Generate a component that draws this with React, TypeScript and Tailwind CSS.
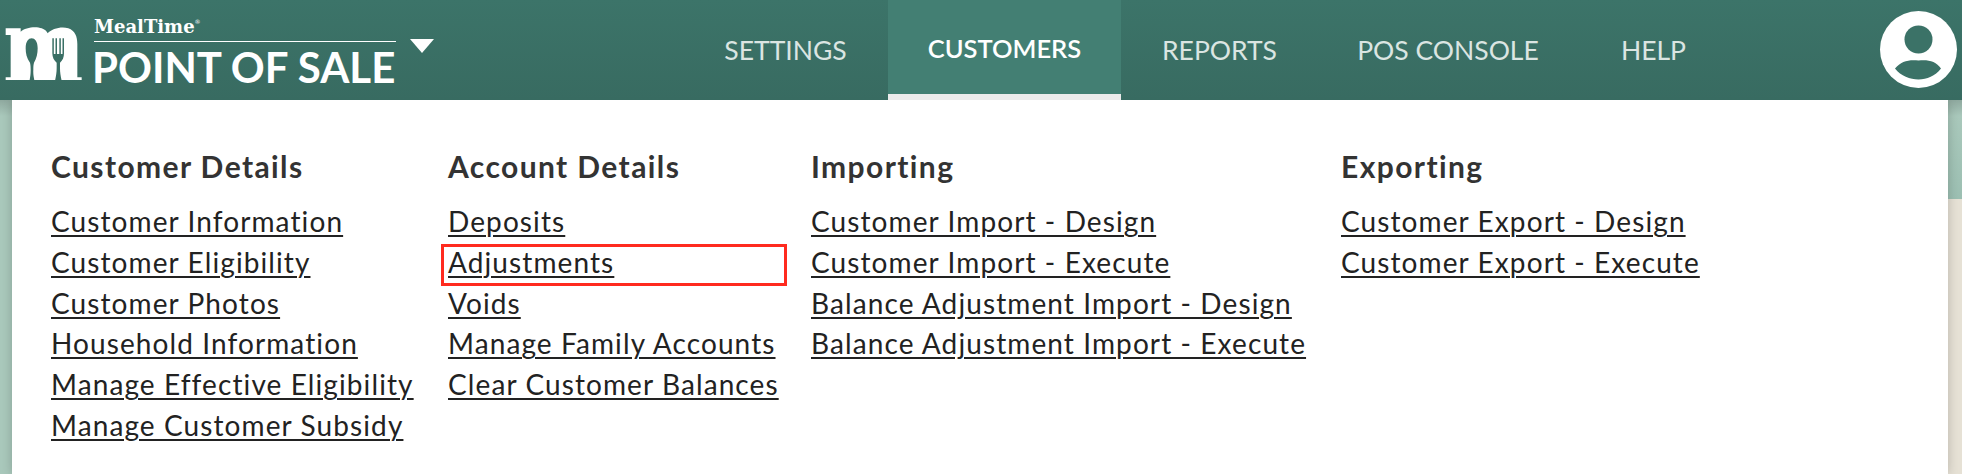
const bodyFont = { fontFamily: 'Lato, sans-serif' };

const columns = [
  {
    title: 'Customer Details',
    width: 'w-[397px]',
    links: [
      'Customer Information',
      'Customer Eligibility',
      'Customer Photos',
      'Household Information',
      'Manage Effective Eligibility',
      'Manage Customer Subsidy',
    ],
  },
  {
    title: 'Account Details',
    width: 'w-[363px]',
    links: ['Deposits', 'Adjustments', 'Voids', 'Manage Family Accounts', 'Clear Customer Balances'],
  },
  {
    title: 'Importing',
    width: 'w-[530px]',
    links: [
      'Customer Import - Design',
      'Customer Import - Execute',
      'Balance Adjustment Import - Design',
      'Balance Adjustment Import - Execute',
    ],
  },
  {
    title: 'Exporting',
    width: 'w-[400px]',
    links: ['Customer Export - Design', 'Customer Export - Execute'],
  },
];

const tabs = [
  { label: 'SETTINGS', width: 'w-[205px]' },
  { label: 'CUSTOMERS', width: 'w-[233px]', active: true },
  { label: 'REPORTS', width: 'w-[197px]' },
  { label: 'POS CONSOLE', width: 'w-[260px]' },
  { label: 'HELP', width: 'w-[151px]' },
];

function Logo() {
  return (
    <svg width="84" height="60" viewBox="0 45 252 180" className="mt-[20px] shrink-0">
      <path
        fill="#fff"
        d="M17 190V172H32V45H17V25H62V35C75 22 108 18 125 25C134 28 140 33 143 40C155 26 185 18 205 25C225 32 232 50 232 72V172H245V190H187C183 175 180 160 180 145V128C188 122 192 112 192 100V55H187.500V102H182.500V55H178V102H171V55H166.500V102H161.500V55H157V100C157 112 162 122 170 128V145C170 160 167 175 163 190H105C102 175 99 165 100 150C100 140 100 135 102 128C110 115 113 100 113 85C113 65 105 55 95 55C85 55 77 65 77 85C77 100 80 115 90 128C92 135 92 145 92 150C92 165 90 175 87 190Z"
        transform="translate(0 45)"
      />
    </svg>
  );
}

export default function App() {
  return (
    <div className="h-[474px] w-[1962px] overflow-hidden" style={bodyFont}>
      <header className="relative z-10 flex h-[100px] bg-gradient-to-b from-[#3c7469] to-[#386b61]">
        <div className="flex w-[683px] shrink-0">
          <Logo />
          <div className="mt-[12px] ml-[10px] flex w-[302px] flex-col text-white">
            <div className="h-[29px] text-[18px] leading-[29px] font-bold" style={{ fontFamily: '"DejaVu Serif", serif' }}>
              MealTime<span className="align-top text-[6px] font-normal leading-[20px]">®</span>
            </div>
            <div className="h-[1px] w-[302px] bg-white" />
            <div className="-ml-[2px] whitespace-nowrap text-[42px] leading-[50px] font-bold">POINT OF SALE</div>
          </div>
          <div className="mt-[39px] ml-[14px] h-0 w-0 border-x-[12px] border-t-[14px] border-x-transparent border-t-white" />
        </div>
        <nav className="flex">
          {tabs.map((t) => (
            <div
              key={t.label}
              className={
                t.active
                  ? `${t.width} flex h-[100px] items-start justify-center border-b-[6px] border-[#ebebeb] bg-[#437f73] pt-[31px] text-[25.500px] leading-[34px] font-semibold text-white`
                  : `${t.width} flex h-[100px] items-start justify-center pt-[33px] text-[26.500px] leading-[34px] text-[#dbe5e2]`
              }
            >
              {t.label}
            </div>
          ))}
        </nav>
        <div className="ml-auto mr-[5px] mt-[11px] flex size-[77px] items-center justify-center rounded-full bg-white">
          <svg width="77" height="77" viewBox="0 0 77 77">
            <circle cx="38.500" cy="28.500" r="14" fill="#3b7267" />
            <path fill="#3b7267" d="M15 57.500C21 50 29 48.500 38.500 49.500 48 48.500 56 50 61 57.500 55 65 47 68.500 38.500 68.500S21 65 15 57.500z" />
          </svg>
        </div>
      </header>
      <div className="flex h-[374px]">
        <div className="w-[12px] shrink-0 bg-[linear-gradient(to_bottom,#8fa99f,#a9c8bb_16px)]" />
        <main className="relative flex w-[1936px] shrink-0 bg-white pt-[45px] pl-[39px] shadow-[0_0_10px_rgba(0,0,0,0.2)]">
          {columns.map((c) => (
            <section key={c.title} className={`${c.width} shrink-0`}>
              <h2 className="text-[30px] leading-[42px] font-bold tracking-[1.400px] text-[#333]">{c.title}</h2>
              <ul className="mt-[14px]">
                {c.links.map((l) => (
                  <li key={l} className="relative h-[40.800px] whitespace-nowrap text-[28px] leading-[40px] tracking-[1.100px] text-[#222]">
                    <a href="#" className="underline decoration-2 underline-offset-[3px]">
                      {l}
                    </a>
                    {l === 'Adjustments' && (
                      <div className="absolute top-[2px] left-[-7px] h-[42px] w-[346px] border-[3px] border-[#ff2a1f]" />
                    )}
                  </li>
                ))}
              </ul>
            </section>
          ))}
        </main>
        <div className="flex w-[14px] shrink-0 flex-col">
          <div className="h-[99px] bg-[linear-gradient(to_bottom,#8fa99f,#a9c8bb_16px,#9cbfb2)]" />
          <div className="flex-1 bg-[#e6e1d5]" />
        </div>
      </div>
    </div>
  );
}
